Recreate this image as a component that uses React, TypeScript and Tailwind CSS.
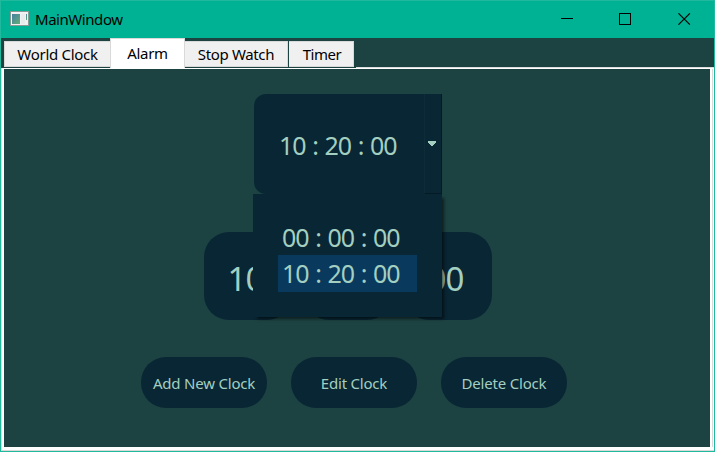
import type { ReactNode } from 'react';

function TitleBar() {
  return (
    <header className="flex h-[37px] shrink-0 items-start bg-[#00b294] text-black">
      <svg className="ml-[9px] mt-[10px] h-4 w-5 shrink-0" viewBox="0 0 20 16" shapeRendering="crispEdges">
        <defs>
          <linearGradient id="pane" x1="0" y1="0" x2="1" y2="1">
            <stop offset="0" stopColor="#4680a4" />
            <stop offset="1" stopColor="#62ae76" />
          </linearGradient>
        </defs>
        <rect x="0" y="0" width="19" height="15" fill="#8b9995" />
        <rect x="1" y="1" width="17" height="13" fill="#f1f1f3" />
        <rect x="2" y="3" width="8" height="10" fill="url(#pane)" />
        <rect x="11" y="3" width="4" height="10" fill="#e8ebeb" />
        <rect x="16" y="3" width="1" height="6" fill="url(#pane)" />
      </svg>
      <span className="ml-[5px] mt-[8px] whitespace-nowrap text-[15px] leading-5 tracking-[-0.45px]">MainWindow</span>
      <svg className="ml-auto mr-[23px] mt-[12px] h-3 w-[130px] shrink-0" viewBox="0 0 130 12" fill="none" stroke="#000">
        <path d="M0 5.5h12M58.5.5h11v11h-11z" shapeRendering="crispEdges" />
        <path d="M117.5.3l11.4 11.4M128.9.3l-11.4 11.4" strokeWidth="1.1" />
      </svg>
    </header>
  );
}

function Tabs() {
  return (
    <nav className="flex h-[30px] shrink-0 items-start bg-[#1c4342] pl-[3px] text-[15px] leading-5 text-black">
      <div className="mt-[3px] flex h-[26px] w-[106px] justify-center whitespace-nowrap border border-r-0 border-[#d9d9d9] bg-[#f0f0f0] pt-[2px] tracking-[-0.3px]">World Clock</div>
      <div className="flex h-[30px] w-[75px] justify-center whitespace-nowrap border border-b-0 border-[#d9d9d9] bg-white pt-[4px] tracking-[-0.35px]">Alarm</div>
      <div className="mt-[3px] flex h-[26px] w-[103px] justify-center whitespace-nowrap border border-l-0 border-[#d9d9d9] bg-[#f0f0f0] pt-[2px] tracking-[-0.35px]">Stop Watch</div>
      <div className="ml-px mt-[3px] flex h-[26px] w-[65px] justify-center whitespace-nowrap border border-l-0 border-[#d9d9d9] bg-[#f0f0f0] pl-[2px] pt-[2px] tracking-[-0.45px]">Timer</div>
      <div className="ml-[2px] mt-[29px] h-px flex-1 bg-[#d9dddd]" />
    </nav>
  );
}

function Digits({ children }: { children?: ReactNode }) {
  return (
    <div className="flex h-[88px] w-[88px] items-center justify-center rounded-[25px] bg-[#092634] pr-[5px] pt-[5px] text-[33px] tracking-[-1px]">
      {children}
    </div>
  );
}

function Button({ children }: { children: ReactNode }) {
  return (
    <button className="h-[51px] w-[126px] whitespace-nowrap rounded-[25px] bg-[#092634] text-[15px] leading-5 tracking-[-0.2px]">
      {children}
    </button>
  );
}

function AlarmSelect() {
  return (
    <div className="relative ml-[250px] flex h-[100px] w-[188px] rounded-l-[12px] bg-[#092634] text-[25px] leading-9">
      <div className="w-[170px] pl-[25px] pt-[33px] whitespace-nowrap tracking-[-1px] [word-spacing:1.1px]">10 : 20 : 00</div>
      <div className="flex w-[18px] items-center border-b border-l border-r border-b-[#061a25] border-l-[#0d2c38] border-r-[#061a25] pl-[3px]">
        <svg className="h-[5px] w-[8px]" viewBox="0 0 8 5" fill="#a3cfc0" shapeRendering="crispEdges">
          <path d="M0 0h8v2H7v1H6v1H5v1H3V4H2V3H1V2H0z" />
        </svg>
      </div>
      <div className="absolute -left-px top-[100px] z-10 h-[123px] w-[189px] bg-[#092634] pl-[25px] pt-[25px] shadow-[3px_3px_3px_-1px_rgba(0,0,0,0.55)]">
        <div className="h-9 w-[139px] whitespace-nowrap pl-[4px] tracking-[-1px] [word-spacing:1.1px]">00 : 00 : 00</div>
        <div className="h-[37px] w-[139px] whitespace-nowrap bg-[#093a5e] pl-[4px] tracking-[-1px] [word-spacing:1.1px]">10 : 20 : 00</div>
      </div>
    </div>
  );
}

export default function App() {
  return (
    <div className="flex h-[452px] w-[715px] flex-col overflow-hidden border border-[#21b99d] bg-white font-['Noto_Sans','Open_Sans',sans-serif]">
      <TitleBar />
      <Tabs />
      <div className="flex flex-1 border-b border-l border-[#d9d9d9] bg-white pb-[3px] pl-[2px] pr-px pt-px">
        <main className="h-[378px] w-[706px] shrink-0 bg-[#1c4342] pt-[25px] text-[#a3cfc0]">
          <AlarmSelect />
          <div className="ml-[200px] mt-[38px] flex gap-3">
            <Digits>10</Digits>
            <Digits />
            <Digits>00</Digits>
          </div>
          <div className="ml-[137px] mt-[37px] flex gap-6">
            <Button>Add New Clock</Button>
            <Button>Edit Clock</Button>
            <Button>Delete Clock</Button>
          </div>
        </main>
        <div className="ml-[2px] w-px bg-[#d9d9d9]" />
      </div>
    </div>
  );
}
